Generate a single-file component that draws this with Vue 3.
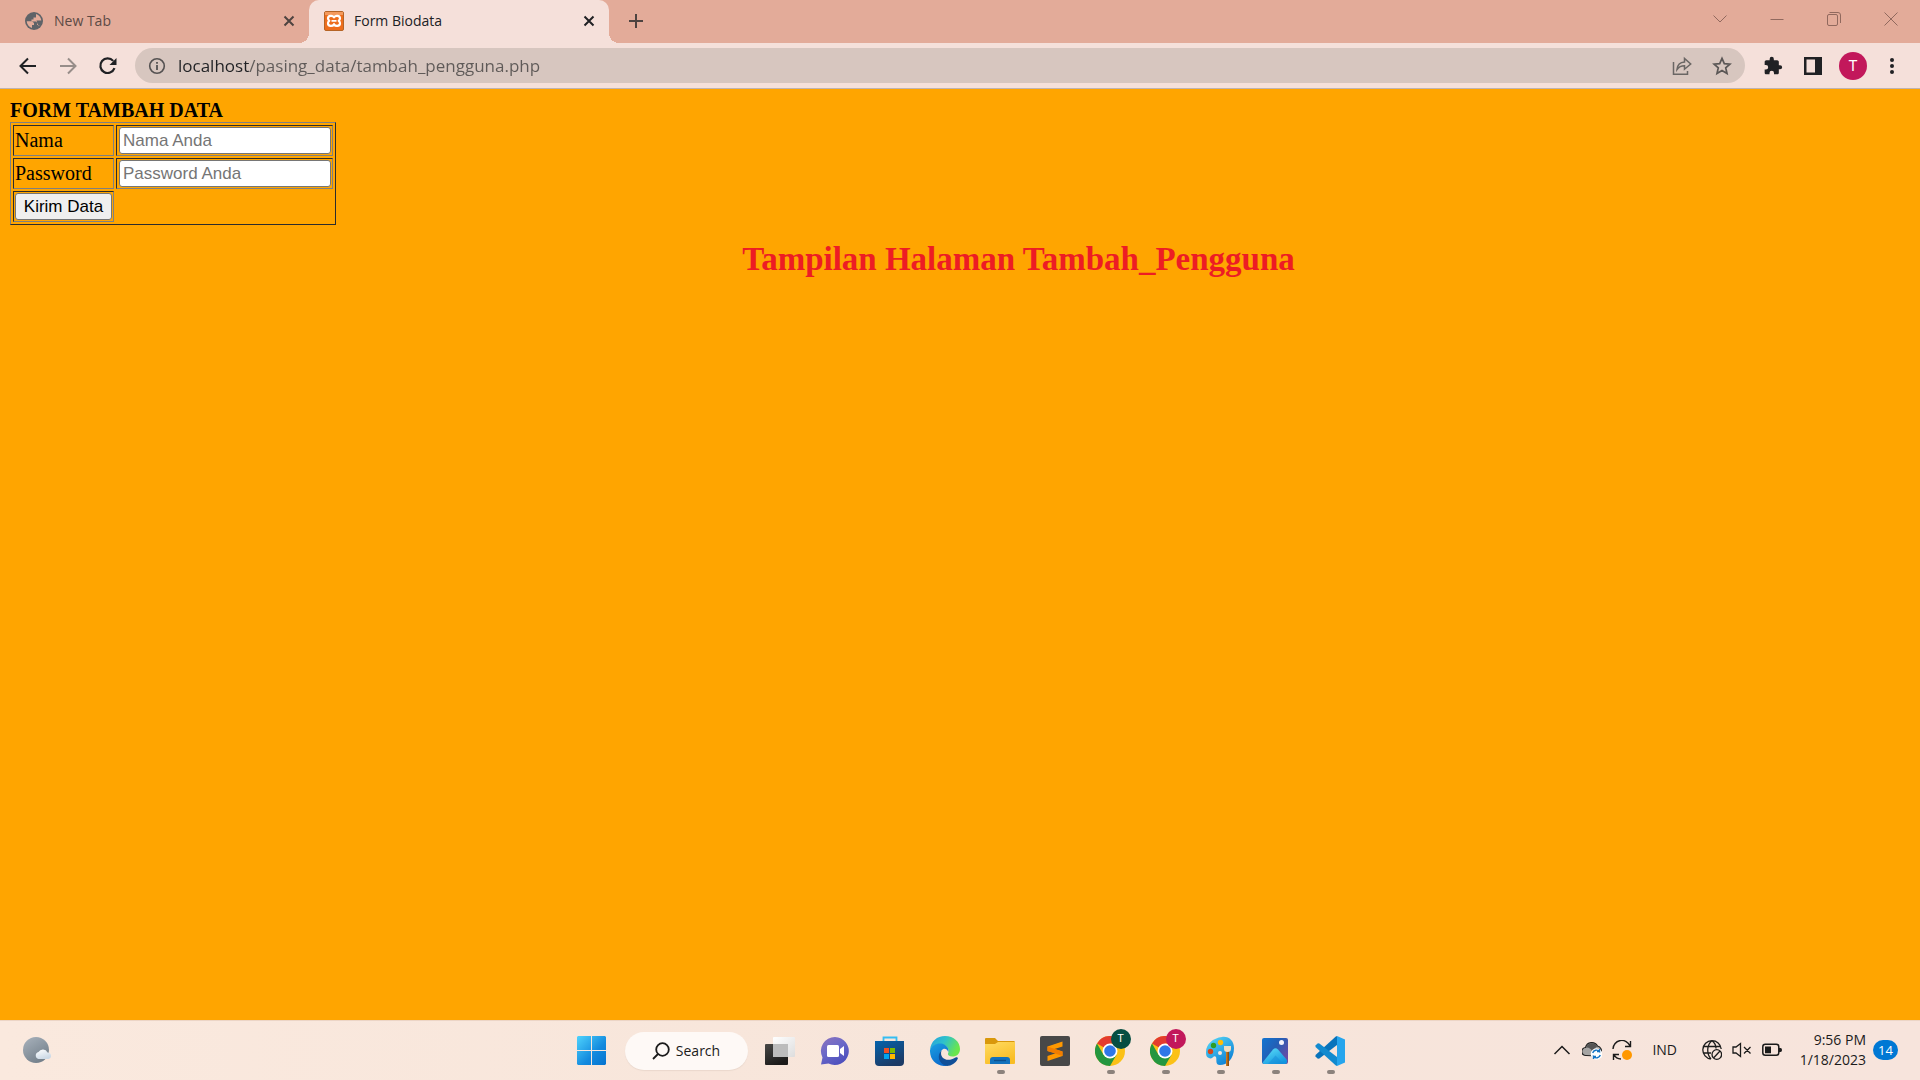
<script setup>
import { ref } from 'vue'

const url = ref('localhost/pasing_data/tambah_pengguna.php')
const nama = ref('')
const password = ref('')
</script>

<template>
  <div class="screen">
    <header class="browser">
      <div class="tabstrip">
        <div class="tab">
          <svg class="favicon" width="20" height="20" viewBox="0 0 20 20">
            <circle cx="10" cy="10" r="9" fill="#5f6368" />
            <path d="M2.700 10.200H8L10 12V14H8V17C5 16.200 2.900 13.500 2.700 10.200Z" fill="#e3ab99" />
            <path d="M12 3C15 3.800 17.200 6.500 17.300 9.700C17.300 12 16.500 13.800 15 15.200C14.500 14.300 13.800 14 13 14V11.500L12 10.500H7.500V8.500H9.500V6.500H12Z" fill="#e3ab99" />
            <path d="M12.500 9.500H18V13L15 15L13.500 13Z" fill="#5f6368" />
          </svg>
          <span class="tab-name">New Tab</span>
          <button class="tab-close" aria-label="Close New Tab">
            <svg width="12" height="12" viewBox="0 0 12 12"><path d="M1.500 1.500L10.500 10.500M10.500 1.500L1.500 10.500" stroke="#4e4340" stroke-width="2" /></svg>
          </button>
        </div>
        <div class="tab active">
          <svg class="favicon" width="20" height="20" viewBox="0 0 20 20">
            <rect x="0.500" y="0.500" width="19" height="19" rx="1.500" fill="#ee6d1c" stroke="#b56426" />
            <path d="M1 1h18v3H1z" fill="#f49a5d" />
            <path d="M10 6C8.500 4.300 4.200 4.200 4 7.200C4 8.500 4.800 9.300 5.300 9.800C4.300 10.500 3.800 11.500 4 12.800C4.500 15.500 8.500 15.500 10 13.500C11.500 15.500 15.500 15.500 16 12.800C16.200 11.500 15.700 10.500 14.700 9.800C15.200 9.300 16 8.500 16 7.200C15.800 4.200 11.500 4.300 10 6Z" fill="none" stroke="#fff" stroke-width="2.200" stroke-linejoin="round" />
            <path d="M7.500 9.800H12.500M10 6V7.200M10 12.500V13.500" stroke="#fff" stroke-width="1.800" />
          </svg>
          <span class="tab-name">Form Biodata</span>
          <button class="tab-close" aria-label="Close Form Biodata">
            <svg width="12" height="12" viewBox="0 0 12 12"><path d="M1.500 1.500L10.500 10.500M10.500 1.500L1.500 10.500" stroke="#202124" stroke-width="2" /></svg>
          </button>
        </div>
        <button class="new-tab" aria-label="New tab">
          <svg width="16" height="16" viewBox="0 0 16 16"><path d="M8 1v14M1 8h14" stroke="#4e4340" stroke-width="2" /></svg>
        </button>
        <div class="window-controls">
          <button aria-label="Search tabs"><svg width="14" height="14" viewBox="0 0 14 14"><path d="M.5 3.500L7 10L13.500 3.500" /></svg></button>
          <button aria-label="Minimize"><svg width="14" height="14" viewBox="0 0 14 14"><path d="M.5 7.500h13" /></svg></button>
          <button aria-label="Restore"><svg width="14" height="14" viewBox="0 0 14 14"><rect x=".5" y="2.500" width="10" height="11" rx="1.500" /><path d="M2.500 .5H11Q13.500 .5 13.500 3V11" /></svg></button>
          <button aria-label="Close window"><svg width="14" height="14" viewBox="0 0 14 14"><path d="M.5 .5L13.500 13.500M13.500 .5L.5 13.500" /></svg></button>
        </div>
      </div>

      <nav class="toolbar">
        <button class="tool" aria-label="Back">
          <svg width="20" height="20" viewBox="0 0 20 20"><path d="M18 10H3M10 2.500L2.500 10L10 17.500" fill="none" stroke="#202124" stroke-width="2" /></svg>
        </button>
        <button class="tool" aria-label="Forward">
          <svg width="20" height="20" viewBox="0 0 20 20"><path d="M2 10H17M10 2.500L17.500 10L10 17.500" fill="none" stroke="#978d89" stroke-width="2" /></svg>
        </button>
        <button class="tool" aria-label="Reload">
          <svg width="20" height="20" viewBox="0 0 20 20"><path d="M16.500 12.200A7.300 7.300 0 1 1 15.200 4.900" fill="none" stroke="#202124" stroke-width="2.200" /><path d="M18.500 2V9H11.500Z" fill="#202124" /></svg>
        </button>
        <div class="omnibox">
          <button class="mini" aria-label="Site information">
            <svg width="18" height="18" viewBox="0 0 18 18"><circle cx="9" cy="9" r="7.300" fill="none" stroke="#555252" stroke-width="1.600" /><path d="M9 8v5M9 5v1.800" stroke="#555252" stroke-width="1.800" /></svg>
          </button>
          <input v-model="url" class="url" type="text" aria-label="Address" />
          <button class="mini" aria-label="Share">
            <svg width="20" height="20" viewBox="0 0 20 20" fill="none" stroke="#6a6664" stroke-width="1.500"><path d="M1.500 6V18.200H15.500V15" /><path d="M5 13.500C5.500 8.500 8 6.200 12.500 6V2.500L18.700 8L12.500 13.200V9.800C9 9.800 7 10.700 5 13.500Z" /></svg>
          </button>
          <button class="mini" aria-label="Bookmark">
            <svg width="20" height="20" viewBox="0 0 20 20"><path d="M10 2.400L12.300 7.600L17.900 8.100L13.700 11.800L15 17.400L10 14.400L5 17.400L6.300 11.800L2.100 8.100L7.700 7.600Z" fill="none" stroke="#5b5756" stroke-width="1.700" /></svg>
          </button>
        </div>
        <div class="actions">
          <button aria-label="Extensions">
            <svg width="20" height="20" viewBox="0 0 24 24"><path fill="#202124" d="M20.500 11H19V7c0-1.100-.9-2-2-2h-4V3.500a2.500 2.500 0 0 0-5 0V5H4c-1.100 0-2 .9-2 2v3.800h1.500a2.700 2.700 0 0 1 0 5.400H2V20c0 1.100.9 2 2 2h3.800v-1.500a2.700 2.700 0 0 1 5.400 0V22H17c1.100 0 2-.9 2-2v-4h1.500a2.500 2.500 0 0 0 0-5z" /></svg>
          </button>
          <button aria-label="Side panel">
            <svg width="20" height="20" viewBox="0 0 20 20"><path d="M1 1h18v18H1zM3.500 3.500v13H12v-13z" fill="#202124" fill-rule="evenodd" /></svg>
          </button>
          <button class="avatar" aria-label="Profile">T</button>
          <button class="dots" aria-label="Menu">
            <svg width="20" height="20" viewBox="0 0 20 20" fill="#202124"><circle cx="10" cy="4" r="2" /><circle cx="10" cy="10" r="2" /><circle cx="10" cy="16" r="2" /></svg>
          </button>
        </div>
      </nav>
    </header>

    <main class="page">
      <form @submit.prevent>
        <b class="form-title">FORM TAMBAH DATA</b>
        <table class="form-table">
          <tbody>
            <tr>
              <td><label for="nama">Nama</label></td>
              <td><input id="nama" v-model="nama" type="text" placeholder="Nama Anda" /></td>
            </tr>
            <tr>
              <td><label for="password">Password</label></td>
              <td><input id="password" v-model="password" type="password" placeholder="Password Anda" /></td>
            </tr>
            <tr>
              <td><button type="submit">Kirim Data</button></td>
            </tr>
          </tbody>
        </table>
      </form>
      <h1>Tampilan Halaman Tambah_Pengguna</h1>
    </main>

    <footer class="taskbar">
      <div class="side">
        <button class="weather" aria-label="Weather">
          <svg width="30" height="30" viewBox="0 0 30 30">
            <defs>
              <linearGradient id="moon" x2="0.600" y2="1"><stop stop-color="#a9b3bd" /><stop offset="1" stop-color="#74808b" /></linearGradient>
              <linearGradient id="puff" x2="0.500" y2="1"><stop stop-color="#fff" /><stop offset="1" stop-color="#ccd9e6" /></linearGradient>
            </defs>
            <circle cx="13" cy="14" r="13" fill="url(#moon)" />
            <path d="M15.500 23A3.600 3.600 0 0 1 15.500 16A5 5 0 0 1 24.500 16.500A3.300 3.300 0 0 1 25.500 23Z" fill="url(#puff)" />
          </svg>
        </button>
      </div>

      <div class="apps">
        <button class="app" aria-label="Start">
          <svg width="30" height="30" viewBox="0 0 30 30">
            <defs><linearGradient id="win" x1="0" y1="0" x2="29" y2="29" gradientUnits="userSpaceOnUse"><stop stop-color="#4fd3fc" /><stop offset="0.600" stop-color="#138ade" /><stop offset="1" stop-color="#0573cf" /></linearGradient></defs>
            <path d="M1 0H14V14H0V1zM15 0H28L29 1V14H15zM0 15H14V29H1L0 28zM15 15H29V28L28 29H15z" fill="url(#win)" />
          </svg>
        </button>
        <button class="search">
          <svg width="18" height="18" viewBox="0 0 18 18" fill="none" stroke="#1b1b1b" stroke-width="1.800"><circle cx="10.500" cy="7.500" r="6.300" /><path d="M6 12L1 17" /></svg>
          Search
        </button>
        <button class="app" aria-label="Task view">
          <svg width="30" height="30" viewBox="0 0 30 30">
            <defs>
              <linearGradient id="tvd" x2="0.500" y2="1"><stop stop-color="#484846" /><stop offset="1" stop-color="#1c1b1a" /></linearGradient>
              <linearGradient id="tvl" x2="1" y2="1"><stop stop-color="#fff" /><stop offset="1" stop-color="#ddd" /></linearGradient>
            </defs>
            <rect y="8" width="23" height="21" rx="1" fill="url(#tvd)" />
            <rect x="8" y="1" width="22" height="20" rx="1" fill="url(#tvl)" />
            <path d="M8 8h15v13H8z" fill="#bcbcbc" />
          </svg>
        </button>
        <button class="app" aria-label="Chat">
          <svg width="30" height="30" viewBox="0 0 30 30">
            <defs><linearGradient id="chat" x2="0.600" y2="1"><stop stop-color="#8d73bd" /><stop offset="0.500" stop-color="#6b69c8" /><stop offset="1" stop-color="#4e50bd" /></linearGradient></defs>
            <path d="M15 1A14 14 0 1 1 8.500 27.500L1 28.500L2.500 21.500A14 14 0 0 1 15 1Z" fill="url(#chat)" />
            <rect x="7" y="9" width="12" height="12" rx="1.500" fill="#fff" /><path d="M20 13L24 10V20L20 17Z" fill="#fff" />
          </svg>
        </button>
        <button class="app" aria-label="Store">
          <svg width="30" height="30" viewBox="0 0 30 30">
            <defs><linearGradient id="store" x2="0.500" y2="1"><stop stop-color="#0563ac" /><stop offset="1" stop-color="#1c3b66" /></linearGradient></defs>
            <path d="M8.500 7V1.500H21.500V7" fill="none" stroke="#35bdf2" stroke-width="1.800" />
            <path d="M0 5H29V26Q29 30 25 30H4Q0 30 0 26Z" fill="url(#store)" />
            <path d="M9 12h5v5H9z" fill="#f25022" /><path d="M15 12h5v5h-5z" fill="#7fba00" /><path d="M9 18h5v5H9z" fill="#00a4ef" /><path d="M15 18h5v5h-5z" fill="#ffb900" />
          </svg>
        </button>
        <button class="app" aria-label="Edge">
          <svg width="30" height="30" viewBox="0 0 30 30">
            <defs>
              <linearGradient id="edge1" x2="1" y2="0.400"><stop stop-color="#269fdf" /><stop offset="0.500" stop-color="#2fc1cb" /><stop offset="1" stop-color="#6ae64c" /></linearGradient>
              <linearGradient id="edge2" x2="0.500" y2="1"><stop stop-color="#1ba0e2" /><stop offset="1" stop-color="#0b6bcc" /></linearGradient>
            </defs>
            <path d="M0 14C1 5 7 0 15 0C24 0 30 6 30 13C30 18 26.500 20.500 22.500 20.500C19 20.500 17.500 19 18 17.500C19 15.500 19 13 16.500 10.500C11 6 3 8.500 0 14Z" fill="url(#edge1)" />
            <path d="M0 14C2.500 8 10 6 15 9C18 11 19 13.500 18.200 16C17 13 14 11.500 11.500 14.500C8 19.500 11 28 18 29.800C7 31.500 -0.500 24 0 14Z" fill="url(#edge2)" />
            <path d="M11.500 14.500C9 22 17 27 25.500 21.500C27.500 20.500 28.500 21.800 27.500 23.200C25.500 27 21.500 29.800 17 30C8.500 28.500 6.500 19 11.500 14.500Z" fill="#104f98" />
          </svg>
        </button>
        <button class="app running" aria-label="File Explorer">
          <svg width="30" height="30" viewBox="0 0 30 30">
            <defs><linearGradient id="folder" x2="0.500" y2="1"><stop stop-color="#ffdb62" /><stop offset="1" stop-color="#f9bd24" /></linearGradient></defs>
            <path d="M0 3Q0 2 1 2H10L13 5H29Q30 5 30 7V12H0Z" fill="#d9980b" />
            <path d="M0 8H10L13 6H30V27Q30 28 29 28H1Q0 28 0 27Z" fill="url(#folder)" />
            <path d="M5 28V24Q5 21 8 21H22Q25 21 25 24V28Z" fill="#1272bd" /><path d="M9 24.500H21" stroke="#0b4f8d" stroke-width="1.400" />
          </svg>
        </button>
        <button class="app" aria-label="Sublime Text">
          <svg width="30" height="30" viewBox="0 0 30 30">
            <rect width="30" height="30" rx="2" fill="#484848" />
            <path d="M7.500 10.500L22.500 5.500V10.500L14.500 13L22.500 15.500V20L7.500 25V20L15.500 17.200L7.500 15Z" fill="#ff9800" /><path d="M7.500 10.500V15L22.500 20V15.500Z" fill="#f27d00" />
          </svg>
        </button>
        <button v-for="account in ['green', 'pink']" :key="account" class="app running" :aria-label="'Chrome ' + account">
          <svg width="30" height="30" viewBox="0 0 30 30">
            <circle cx="15" cy="15" r="15" fill="#fbc116" />
            <path d="M15 15L2 7.500A15 15 0 0 1 28 7.500H15Z" fill="#e33b2e" />
            <path d="M2 7.500A15 15 0 0 0 15 30L21.500 18.700L8.500 18.700Z" fill="#24963f" />
            <circle cx="15" cy="15" r="7.500" fill="#fff" /><circle cx="15" cy="15" r="5.800" fill="#2f77e8" />
          </svg>
          <span class="account" :class="account">T</span>
        </button>
        <button class="app running" aria-label="Paint">
          <svg width="30" height="30" viewBox="0 0 30 30">
            <defs><linearGradient id="paint" x2="0.700" y2="1"><stop stop-color="#5cdcf8" /><stop offset="1" stop-color="#0d80d5" /></linearGradient></defs>
            <path d="M17 1C24 0 29 5 29 12C29 23 22 29 15 29C10 29 12 24 11 21C9 18 7 24 4 22C1 21 1 18 1 16C1 8 8 2 17 1Z" fill="url(#paint)" />
            <circle cx="15.500" cy="6.500" r="2.700" fill="#ffbd08" /><circle cx="8.500" cy="9.500" r="2.700" fill="#2f9d24" /><circle cx="5.500" cy="15.500" r="2.700" fill="#d5461c" /><circle cx="15" cy="17" r="2" fill="#f8e6db" />
            <path d="M21 15H24L24 30H21Z" fill="#c8791d" /><path d="M22.500 15H24V30H22.500Z" fill="#8c4e12" /><path d="M19 10H26V13Q26 16 22.500 16Q19 16 19 13Z" fill="#efdcc0" />
          </svg>
        </button>
        <button class="app running" aria-label="Photos">
          <svg width="30" height="30" viewBox="0 0 30 30">
            <defs>
              <linearGradient id="photo" x2="1" y2="0.700"><stop stop-color="#1275d1" /><stop offset="0.500" stop-color="#235fb6" /><stop offset="1" stop-color="#6b4ba5" /></linearGradient>
              <linearGradient id="hill" x2="0.700" y2="1"><stop stop-color="#60e0f8" /><stop offset="1" stop-color="#1295df" /></linearGradient>
            </defs>
            <rect x="2" y="2" width="26" height="26" rx="2" fill="url(#photo)" />
            <path d="M3 26L13 13.500Q15.500 11 18 13.500L27 24V26Q27 28 25 28H4Q2.500 28 3 26Z" fill="url(#hill)" /><path d="M8 28L15.500 19.500L24 28Z" fill="#178bd8" opacity="0.500" />
            <circle cx="21.500" cy="6.500" r="2.500" fill="#f4f3fb" />
          </svg>
        </button>
        <button class="app running" aria-label="Visual Studio Code">
          <svg width="30" height="30" viewBox="0 0 30 30">
            <path d="M22 0L30 3.500V26.500L22 30Z" fill="#26a5ed" />
            <path d="M22 0V9L4 22.700L2.500 22.500L.5 20.500V19L20.500 .8Z" fill="#0873bb" />
            <path d="M22 30V21L4 7.300L2.500 7.500L.5 9.500V11L20.500 29.200Z" fill="#128acf" />
          </svg>
        </button>
      </div>

      <div class="side tray">
        <button aria-label="Show hidden icons"><svg width="20" height="20" viewBox="0 0 20 20"><path d="M2.500 14L10 6.500L17.500 14" fill="none" stroke="#1b1b1b" stroke-width="1.500" /></svg></button>
        <button aria-label="OneDrive">
          <svg width="20" height="20" viewBox="0 0 20 20">
            <path d="M4 15.500A4 4 0 0 1 3.500 7.500A6.500 6.500 0 0 1 15.500 6A5 5 0 0 1 19 13L15 16Z" fill="#a5a4a3" stroke="#222" stroke-width="1.200" />
            <path d="M4 7.500A6.500 6.500 0 0 1 15.500 6L10 11Q8 7 4 7.500Z" fill="#555" />
            <circle cx="14.500" cy="14" r="5.800" fill="#fff" /><path d="M10.700 13A4 4 0 0 1 17.500 11.500V9M18.300 15A4 4 0 0 1 11.500 16.500V19M17.500 11.500H15M11.500 16.500H14" fill="none" stroke="#1474c4" stroke-width="1.400" />
          </svg>
        </button>
        <button class="sync" aria-label="Windows Update">
          <svg width="20" height="20" viewBox="0 0 20 20" fill="none" stroke="#1b1b1b" stroke-width="1.400"><path d="M1 9A8.800 8.800 0 0 1 18 6M18.500 1V6.500H13M1.500 20V14.500H7M2 14.500Q4 19 9 19" /><circle cx="15" cy="15" r="5" fill="#ff9800" stroke="none" /></svg>
        </button>
        <button class="language">IND</button>
        <button aria-label="Network">
          <svg width="20" height="20" viewBox="0 0 20 20" fill="none" stroke="#1b1b1b" stroke-width="1.300"><path d="M9 19A9.200 9.200 0 1 1 19.200 9M9 19C4.500 14 4.500 5 10 .8C13 3 14 6 14 8.500M1.500 6.500H18.500M1.500 13H9" /><circle cx="14.800" cy="14.500" r="4.800" /><path d="M11.500 18L18 11" /></svg>
        </button>
        <button aria-label="Muted">
          <svg width="20" height="20" viewBox="0 0 20 20" fill="none" stroke="#1b1b1b" stroke-width="1.300"><path d="M1 7H4L8.500 3.500V16.500L4 13H1ZM12 7L18.500 13.500M18.500 7L12 13.500" /></svg>
        </button>
        <button aria-label="Battery">
          <svg width="20" height="20" viewBox="0 0 20 20"><rect x=".8" y="4.300" width="16" height="11" rx="2.500" fill="none" stroke="#1b1b1b" stroke-width="1.500" /><path d="M3 6.500H9V13.200H3ZM17 8H18.500Q20 8 20 10T18.500 12H17Z" fill="#1b1b1b" /></svg>
        </button>
        <button class="clock"><time>9:56 PM</time><time>1/18/2023</time></button>
        <button class="notice">14</button>
      </div>
    </footer>
  </div>
</template>

<style>
body {
  margin: 0;
}
</style>

<style scoped>
.screen {
  display: flex;
  flex-direction: column;
  min-height: 100vh;
  font-family: "Open Sans", "Noto Sans", sans-serif;
  color: #202124;
}

button {
  display: flex;
  align-items: center;
  justify-content: center;
  padding: 0;
  border: 0;
  background: none;
  color: inherit;
  font: inherit;
}

svg {
  display: block;
  flex: none;
}

.tabstrip {
  display: flex;
  height: 43px;
  padding-left: 9px;
  background: #e3ab99;
}

.tab {
  position: relative;
  display: flex;
  align-items: center;
  box-sizing: border-box;
  width: 300px;
  padding: 0 12px 1px 15px;
  font-size: 14px;
  color: #5c4a45;
}

.tab-name {
  flex: 1;
  padding: 0 0 2px 10px;
}

.tab-close {
  width: 16px;
  height: 16px;
}

.active {
  border-radius: 10px 10px 0 0;
  background: #f5e0da;
  color: #202124;
}

.active::before,
.active::after {
  content: "";
  position: absolute;
  bottom: 0;
  width: 10px;
  height: 10px;
}

.active::before {
  right: 100%;
  background: radial-gradient(circle at 0 0, transparent 10px, #f5e0da 10px);
}

.active::after {
  left: 100%;
  background: radial-gradient(circle at 100% 0, transparent 10px, #f5e0da 10px);
}

.new-tab {
  width: 54px;
  height: 42px;
}

.window-controls {
  display: flex;
  height: 37px;
  margin: 0 1px 0 auto;
}

.window-controls button {
  width: 57px;
}

.window-controls svg {
  fill: none;
  stroke: #91695e;
}

.toolbar {
  display: flex;
  align-items: center;
  height: 45px;
  padding: 0 18px 0 8px;
  border-bottom: 1px solid #bfb3b0;
  background: #f5e0da;
}

.tool {
  width: 40px;
  height: 35px;
}

.omnibox {
  display: flex;
  flex: 1;
  align-items: center;
  gap: 20px;
  height: 35px;
  margin-left: 7px;
  padding: 0 13px;
  border-radius: 18px;
  background: #d7c6bf;
}

.url {
  flex: 1;
  min-width: 0;
  height: 28px;
  margin-left: -8px;
  padding: 0;
  border: 0;
  outline: 0;
  background: linear-gradient(to right, #202124 72px, #5f5a58 72px);
  background-clip: text;
  color: transparent;
  font: 17px/28px "Open Sans", "Noto Sans", sans-serif;
}

.actions {
  display: flex;
  align-items: center;
  gap: 20px;
  padding-left: 18px;
}

.avatar {
  width: 28px;
  height: 28px;
  margin: 0 -4px;
  border-radius: 50%;
  background: #c2185b;
  color: #fff;
  font: 15px/28px Roboto, sans-serif;
}

.dots {
  margin-left: -1px;
}

.page {
  flex: 1;
  padding: 10px;
  background: #ffa500;
  color: #000;
  font-family: "Liberation Serif", serif;
}

.form-title {
  display: block;
  font-size: 20px;
  line-height: 23px;
}

.form-table {
  border: 1px solid;
  border-color: #808080 #2c2c2c #2c2c2c #808080;
  border-spacing: 2px;
  font-size: 20px;
  line-height: 23px;
}

.form-table td {
  padding: 1px;
  border: 1px solid;
  border-color: #2c2c2c #808080 #808080 #2c2c2c;
}

.form-table td + td {
  padding-left: 2px;
}

.form-table input,
.form-table button {
  display: block;
  box-sizing: border-box;
  height: 27px;
  border: 1px solid #767676;
  border-radius: 3px;
  font: 17px/23px "Liberation Sans", sans-serif;
}

.form-table input {
  width: 212px;
  padding: 1px 3px;
  background: #fff;
}

.form-table input::placeholder {
  color: #757575;
}

.form-table button {
  width: 97px;
  background: #efefef;
}

h1 {
  margin: 15px 0 0 117px;
  color: #ed1c24;
  font-size: 33px;
  line-height: 38px;
  text-align: center;
}

.taskbar {
  display: grid;
  grid-template-columns: 1fr auto 1fr;
  align-items: center;
  height: 59px;
  padding-left: 2px;
  border-top: 1px solid #ecd5c6;
  background: linear-gradient(to right, #fae9de, #f7e5da 50%, #f7e4dc);
  color: #1b1b1b;
  font-size: 14px;
}

.side {
  display: flex;
  align-items: center;
}

.weather {
  padding-left: 21px;
}

.apps {
  display: flex;
  align-items: center;
}

.app {
  position: relative;
  width: 55px;
  height: 59px;
}

.running::after {
  content: "";
  position: absolute;
  bottom: 6px;
  left: 24px;
  width: 8px;
  height: 4px;
  border-radius: 2px;
  background: #8c827c;
}

.account {
  position: absolute;
  top: 8px;
  left: 28px;
  width: 20px;
  height: 20px;
  border-radius: 50%;
  color: #fff;
  font: 11px/20px Roboto, sans-serif;
}

.green {
  background: #064e42;
}

.pink {
  background: #c2185b;
}

.search {
  gap: 6px;
  width: 123px;
  height: 38px;
  margin: 0 5px;
  border-radius: 19px;
  background: #fef9f6;
  box-shadow: 0 1px 1px #ead8cd;
}

.tray {
  gap: 10px;
  justify-content: flex-end;
  padding: 0 22px 2px 0;
}

.language {
  margin: 0 15px 0 10px;
}

.clock {
  flex-direction: column;
  align-items: flex-end;
  width: 74px;
  line-height: 20px;
}

.notice {
  width: 25px;
  height: 20px;
  margin-left: -3px;
  border-radius: 10px;
  background: #0078d4;
  color: #fff;
  font-size: 13px;
}
</style>
